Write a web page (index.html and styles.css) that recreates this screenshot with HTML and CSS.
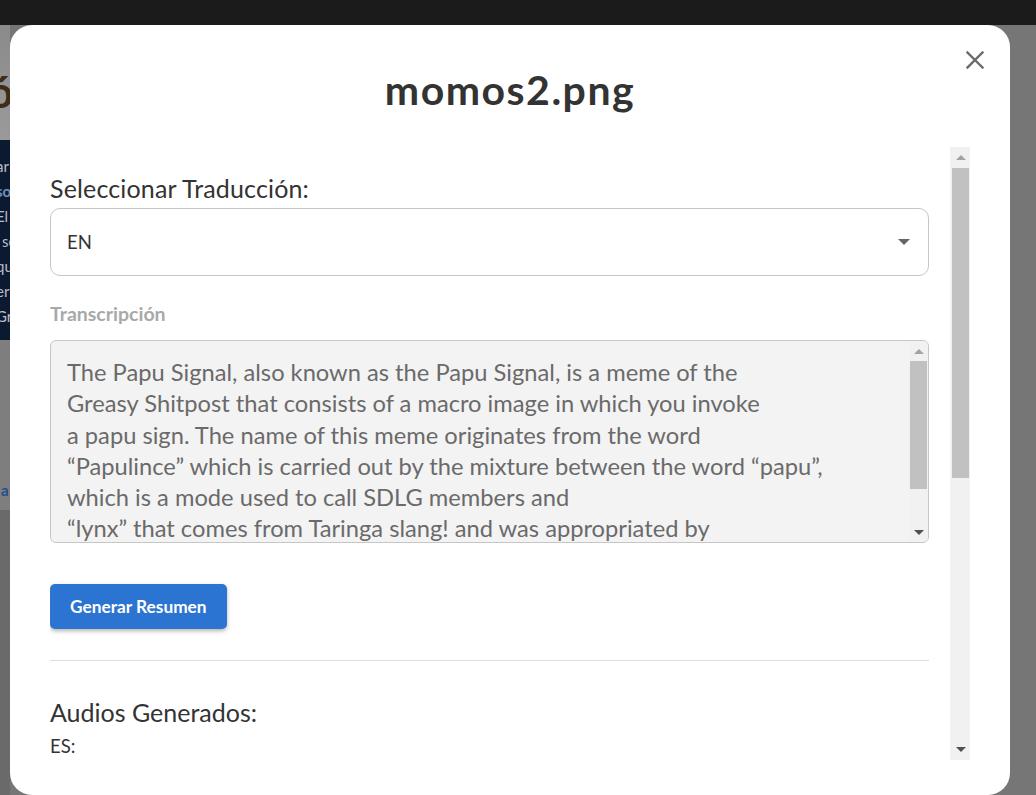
FILE: index.html
```html
<!DOCTYPE html>
<html lang="es">
<head>
<meta charset="utf-8">
<title>momos2.png</title>
<link rel="stylesheet" href="styles.css">
</head>
<body>
<div class="topbar"></div>
<div class="stage">
  <div class="backdrop-left" aria-hidden="true">
    <div class="bl-hero"><span class="bl-glyph">ó</span></div>
    <div class="bl-nav">
      <span class="bl-line">ar</span>
      <span class="bl-line bl-strong">so</span>
      <span class="bl-line">El</span>
      <span class="bl-line bl-shift">se</span>
      <span class="bl-line">qu</span>
      <span class="bl-line">er</span>
      <span class="bl-line">Gra</span>
    </div>
    <div class="bl-mid"><span class="bl-link">a</span></div>
    <div class="bl-foot"></div>
  </div>

  <div class="modal">
    <button class="close" aria-label="Cerrar">
      <svg width="18" height="18" viewBox="0 0 18 18"><path d="M1.5 1.5L16.5 16.5M16.5 1.5L1.5 16.5" stroke="#6b6b6b" stroke-width="2.4" stroke-linecap="square" fill="none"/></svg>
    </button>
    <h2 class="modal-title">momos2.png</h2>

    <div class="modal-body">
      <div class="body-content">
        <label class="field-label">Seleccionar Traducción:</label>
        <div class="select">
          <span class="select-value">EN</span>
          <span class="caret"></span>
        </div>

        <div class="sub-label">Transcripción</div>
        <div class="textarea">
          <div class="ta-text">The Papu Signal, also known as the Papu Signal, is a meme of the<br>Greasy Shitpost that consists of a macro image in which you invoke<br>a papu sign. The name of this meme originates from the word<br>“Papulince” which is carried out by the mixture between the word “papu”,<br>which is a mode used to call SDLG members and<br>“lynx” that comes from Taringa slang! and was appropriated by<br>the community of the Greasy Shitpost to name its members.</div>
          <div class="scrollbar sb-small">
            <div class="sb-btn"><span class="arrow-up light"></span></div>
            <div class="sb-track">
              <div class="sb-thumb"></div>
            </div>
            <div class="sb-btn"><span class="arrow-down"></span></div>
          </div>
        </div>

        <button class="btn-primary">Generar Resumen</button>

        <hr class="divider">

        <h3 class="section-title">Audios Generados:</h3>
        <div class="audio-lang">ES:</div>
      </div>

      <div class="scrollbar sb-big">
        <div class="sb-btn"><span class="arrow-up light"></span></div>
        <div class="sb-track">
          <div class="sb-thumb"></div>
        </div>
        <div class="sb-btn"><span class="arrow-down"></span></div>
      </div>
    </div>
  </div>

  <div class="backdrop-right"></div>
</div>
</body>
</html>
```

FILE: styles.css
```css
* { box-sizing: border-box; }

html, body {
  margin: 0;
  padding: 0;
  height: 100%;
  overflow: hidden;
}

body {
  background: #767676;
  font-family: Lato, "Open Sans", sans-serif;
  color: #333;
}

.topbar {
  height: 25px;
  background: #1b1b1b;
}

.stage {
  display: flex;
  height: 770px;
}

/* dimmed page behind the dialog */
.backdrop-left {
  width: 10px;
  flex: none;
  display: flex;
  flex-direction: column;
  overflow: hidden;
}

.bl-hero {
  height: 115px;
  background: linear-gradient(#8a8a8a, #9a9a9a);
  padding-top: 44px;
  overflow: hidden;
}

.bl-glyph {
  display: block;
  margin-left: -12px;
  font-size: 44px;
  font-weight: 700;
  line-height: 44px;
  color: #3d2c1a;
}

.bl-nav {
  height: 200px;
  background: #0c1a31;
  display: flex;
  flex-direction: column;
  padding-top: 14px;
  overflow: hidden;
}

.bl-line {
  display: block;
  height: 25px;
  line-height: 25px;
  font-size: 15px;
  color: #b9bec8;
  margin-left: -4px;
  white-space: nowrap;
}

.bl-strong {
  color: #6d8fb8;
  font-weight: 700;
}

.bl-shift { margin-left: 2px; }

.bl-mid {
  height: 170px;
  background: #7e7e7e;
  padding-top: 140px;
  overflow: hidden;
}

.bl-link {
  display: block;
  font-size: 15px;
  line-height: 20px;
  font-weight: 700;
  color: #1f4f8f;
  margin-left: 1px;
}

.bl-foot {
  flex: 1;
  background: #6a6a6a;
}

.backdrop-right {
  flex: 1;
  background: #767676;
}

/* dialog */
.modal {
  position: relative;
  width: 1000px;
  flex: none;
  background: #fff;
  border-radius: 22px;
  padding: 41px 40px 35px 40px;
  display: flex;
  flex-direction: column;
}

.close {
  position: absolute;
  top: 26px;
  right: 26px;
  width: 18px;
  height: 18px;
  padding: 0;
  border: 0;
  background: none;
  cursor: pointer;
}

.close svg { display: block; }

.modal-title {
  margin: 0 0 33px 0;
  text-align: center;
  font-size: 41px;
  line-height: 48px;
  font-weight: 700;
  letter-spacing: 1.5px;
  color: #333;
}

.modal-body {
  display: flex;
  gap: 21px;
  height: 613px;
}

.body-content {
  flex: 1;
  overflow: hidden;
  padding-top: 26px;
  display: flex;
  flex-direction: column;
}

.field-label {
  display: block;
  font-size: 25px;
  line-height: 30px;
  letter-spacing: 0.15px;
  color: #333;
  margin-bottom: 5px;
}

.select {
  height: 68px;
  border: 1px solid #c6c6c6;
  border-radius: 10px;
  display: flex;
  align-items: center;
  justify-content: space-between;
  padding: 0 18px 0 16px;
  flex: none;
}

.select-value {
  font-size: 18.5px;
  color: #333;
}

.caret {
  width: 0;
  height: 0;
  border-left: 6px solid transparent;
  border-right: 6px solid transparent;
  border-top: 6px solid #666;
}

.sub-label {
  margin-top: 26px;
  font-size: 19.5px;
  line-height: 24px;
  font-weight: 700;
  color: #a9a9a9;
}

.textarea {
  margin-top: 14px;
  height: 203px;
  flex: none;
  background: #f3f3f3;
  border: 1px solid #c6c6c6;
  border-radius: 6px;
  display: flex;
  overflow: hidden;
}

.ta-text {
  flex: 1;
  padding: 16px 0 0 16px;
  font-size: 23.7px;
  line-height: 31.3px;
  color: #6a6a6a;
  white-space: nowrap;
  overflow: hidden;
}

/* scrollbars */
.scrollbar {
  flex: none;
  display: flex;
  flex-direction: column;
  background: #f1f1f1;
}

.sb-small {
  width: 19px;
  padding: 0 1px 0 1px;
}

.sb-big {
  width: 20px;
  padding: 0 1px 0 2px;
}

.sb-btn {
  height: 21px;
  display: flex;
  align-items: center;
  justify-content: center;
  flex: none;
}

.sb-track {
  flex: 1;
  display: flex;
  flex-direction: column;
}

.sb-small .sb-btn { height: 20px; }
.sb-small .sb-thumb { height: 128px; background: #c1c1c1; }
.sb-big .sb-thumb { height: 310px; background: #c1c1c1; }

.arrow-up {
  width: 0;
  height: 0;
  border-left: 5px solid transparent;
  border-right: 5px solid transparent;
  border-bottom: 5px solid #505050;
}

.arrow-up.light { border-bottom-color: #a3a3a3; }

.arrow-down {
  width: 0;
  height: 0;
  border-left: 5px solid transparent;
  border-right: 5px solid transparent;
  border-top: 5px solid #505050;
}

.btn-primary {
  align-self: flex-start;
  margin-top: 41px;
  height: 45px;
  padding: 0 20px;
  border: 0;
  border-radius: 5px;
  background: #2c74d1;
  color: #fff;
  font-family: Lato, "Open Sans", sans-serif;
  font-size: 17.3px;
  font-weight: 700;
  box-shadow: 0 2px 4px rgba(0, 0, 0, 0.3);
  cursor: pointer;
}

.divider {
  margin: 31px 0 0 0;
  border: 0;
  border-top: 1px solid #dedede;
  height: 0;
}

.section-title {
  margin: 36px 0 0 0;
  font-size: 25px;
  line-height: 30px;
  font-weight: 400;
  color: #333;
}

.audio-lang {
  margin-top: 7px;
  font-size: 18.5px;
  line-height: 24px;
  color: #333;
}
```
